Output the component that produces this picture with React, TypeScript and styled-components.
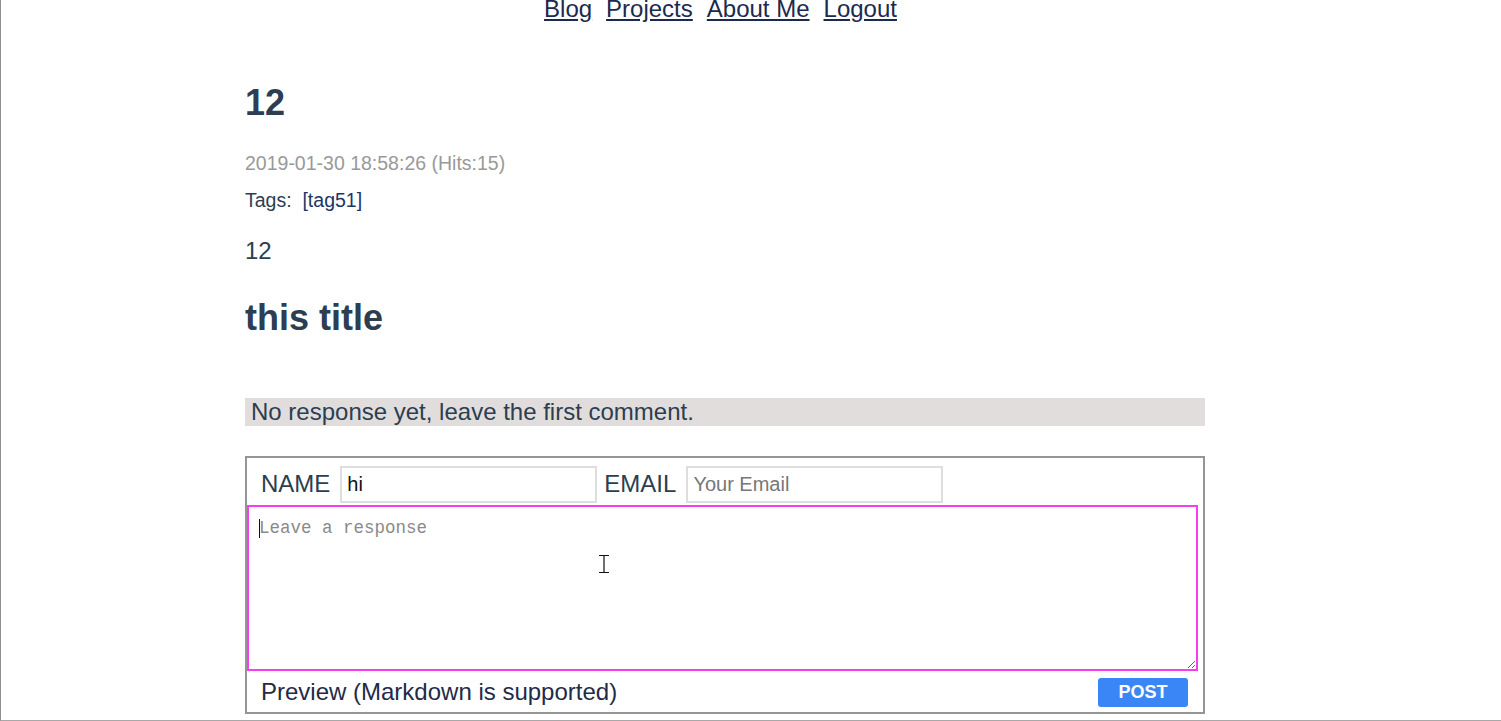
import React from 'react';
import styled, { createGlobalStyle } from 'styled-components';

const GlobalStyle = createGlobalStyle`
  html, body { margin: 0; padding: 0; background: #fff; }
  body { font-family: "Liberation Sans", Arial, sans-serif; color: #2c3e50; }
  * { box-sizing: border-box; }
`;

const Frame = styled.div`
  position: relative;
  width: 1501px;
  height: 721px;
  border-left: 1px solid #8f8f8f;
  border-bottom: 1px solid #a8a8a8;
  overflow: hidden;
`;

const Container = styled.main`
  width: 960px;
  margin-left: 244px;
`;

const Nav = styled.nav`
  display: flex;
  justify-content: center;
  gap: 14px;
  margin-top: -5px;
  padding-right: 9px;
  font-size: 24px;
  line-height: normal;
`;

const NavLink = styled.a`
  color: #1c2a4d;
  text-decoration: underline;
`;

const Title = styled.h1`
  margin: 59px 0 0;
  font-size: 36px;
  font-weight: bold;
  line-height: normal;
  color: #2c3e50;
`;

const Meta = styled.div`
  margin-top: 28px;
  font-size: 19.5px;
  line-height: normal;
  color: #999;
`;

const Tags = styled.div`
  margin-top: 14px;
  font-size: 19.5px;
  line-height: normal;
  color: #2c3e50;
`;

const TagLink = styled.a`
  color: #1b3566;
  text-decoration: none;
`;

const Body = styled.p`
  margin: 25px 0 0;
  font-size: 24px;
  line-height: normal;
`;

const SubTitle = styled.h2`
  margin: 32px 0 0;
  font-size: 36px;
  font-weight: bold;
  line-height: normal;
`;

const Notice = styled.div`
  margin-top: 59px;
  height: 28px;
  padding-left: 6px;
  background: #e1dddd;
  font-size: 24px;
  line-height: 28px;
  color: #2c3e50;
`;

const CommentForm = styled.form`
  margin-top: 30px;
  height: 258px;
  border: 2px solid #959595;
  display: flex;
  flex-direction: column;
`;

const FieldRow = styled.div`
  display: flex;
  align-items: center;
  padding: 5px 0 0 14px;
  height: 47px;
`;

const Label = styled.label`
  font-size: 24px;
  line-height: normal;
  margin-right: 10px;
  color: #2c3e50;
`;

const TextInput = styled.input`
  width: 257px;
  height: 37px;
  margin-right: 7px;
  border: 2px solid #dedede;
  padding: 0 0 0 5px;
  font-family: "Liberation Sans", Arial, sans-serif;
  font-size: 20px;
  color: #111;
  outline: none;
  &::placeholder { color: #777; }
`;

const TextAreaWrap = styled.div`
  position: relative;
  width: 951px;
  height: 166px;
`;

const ResponseArea = styled.textarea`
  display: block;
  width: 100%;
  height: 100%;
  border: 2px solid #f53ef2;
  padding: 11px 10px;
  font-family: "Liberation Mono", "Courier New", monospace;
  font-size: 17.5px;
  line-height: 21px;
  color: #222;
  resize: both;
  outline: none;
  &::placeholder { color: #8a8a8a; }
`;

const Caret = styled.span`
  position: absolute;
  left: 12px;
  top: 14px;
  width: 1px;
  height: 19px;
  background: #111;
`;

const MouseCursor = styled.svg`
  position: absolute;
  left: 351px;
  top: 50px;
`;

const FooterRow = styled.div`
  flex: 1;
  display: flex;
  align-items: center;
  justify-content: space-between;
  padding: 0 15px 0 14px;
`;

const Hint = styled.span`
  font-size: 24px;
  line-height: normal;
  color: #1f2b48;
  margin-top: 1px;
`;

const PostButton = styled.button`
  width: 90px;
  height: 29px;
  margin-top: 2px;
  border: none;
  border-radius: 3px;
  background: #3a86f6;
  color: #fff;
  font-family: "Liberation Sans", Arial, sans-serif;
  font-weight: bold;
  font-size: 18px;
  cursor: pointer;
`;

export default function App() {
  return (
    <>
      <GlobalStyle />
      <Frame>
        <Container>
          <Nav>
            <NavLink href="#">Blog</NavLink>
            <NavLink href="#">Projects</NavLink>
            <NavLink href="#">About Me</NavLink>
            <NavLink href="#">Logout</NavLink>
          </Nav>
          <Title>12</Title>
          <Meta>2019-01-30 18:58:26 (Hits:15)</Meta>
          <Tags>
            Tags:&nbsp; <TagLink href="#">[tag51]</TagLink>
          </Tags>
          <Body>12</Body>
          <SubTitle>this title</SubTitle>
          <Notice>No response yet, leave the first comment.</Notice>
          <CommentForm onSubmit={(e) => e.preventDefault()}>
            <FieldRow>
              <Label>NAME</Label>
              <TextInput defaultValue="hi" />
              <Label>EMAIL</Label>
              <TextInput placeholder="Your Email" />
            </FieldRow>
            <TextAreaWrap>
              <ResponseArea placeholder="Leave a response" />
              <Caret />
              <MouseCursor width="12" height="18" viewBox="0 0 12 18">
                <path d="M1 0.5h10M1 17.5h10M6 0.5v17" stroke="#111" strokeWidth="1.2" fill="none" />
              </MouseCursor>
            </TextAreaWrap>
            <FooterRow>
              <Hint>Preview (Markdown is supported)</Hint>
              <PostButton type="submit">POST</PostButton>
            </FooterRow>
          </CommentForm>
        </Container>
      </Frame>
    </>
  );
}
